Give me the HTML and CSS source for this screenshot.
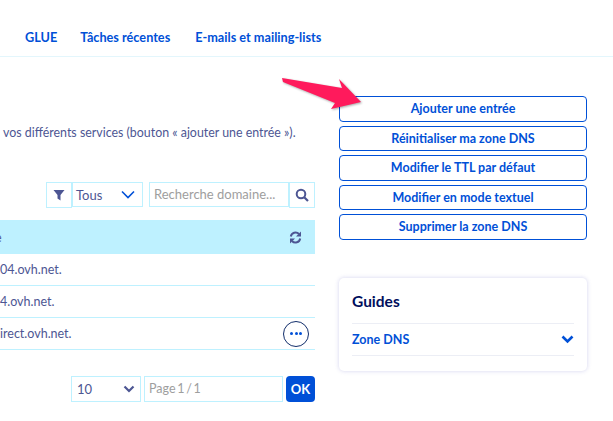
FILE: index.html
```html
<!DOCTYPE html>
<html lang="fr">
<head>
  <meta charset="UTF-8" />
  <title>Zone DNS</title>
  <link rel="stylesheet" href="styles.css">
</head>
<body>

<div class="tabs">
  <a href="#">GLUE</a>
  <a href="#">Tâches récentes</a>
  <a href="#">E-mails et mailing-lists</a>
</div>

<div class="content">
  <div class="main">
    <p class="intro">vos différents services (bouton « ajouter une entrée »).</p>

    <div class="filters">
      <span class="addon">
        <svg width="12" height="12" viewBox="0 0 12 12"><path d="M0.5 1h11L7.5 6v5.5L4.5 9.5V6z" fill="#4d5693"/></svg>
      </span>
      <span class="select select-type">Tous
        <svg width="16" height="9" viewBox="0 0 16 9"><path d="M2 1.5l6 6 6-6" fill="none" stroke="#0050d7" stroke-width="1.6"/></svg>
      </span>
      <span class="search-input">Recherche domaine...</span>
      <span class="addon addon-search">
        <svg width="14" height="14" viewBox="0 0 14 14"><circle cx="6" cy="6" r="4.3" fill="none" stroke="#4d5693" stroke-width="2"/><path d="M9.2 9.2l3.8 3.8" stroke="#4d5693" stroke-width="2.2"/></svg>
      </span>
    </div>

    <div class="table">
      <div class="table-head">
        <span class="cell-text">e</span>
        <svg width="13" height="13" viewBox="0 0 13 13"><path d="M1.800 5.500A4.800 4.800 0 0 1 10 3" fill="none" stroke="#4d5693" stroke-width="2"/><path d="M12 0.500v5h-5z" fill="#4d5693"/><path d="M11.200 7.500A4.800 4.800 0 0 1 3 10" fill="none" stroke="#4d5693" stroke-width="2"/><path d="M1 12.500v-5h5z" fill="#4d5693"/></svg>
      </div>
      <div class="row"><span class="cell-text">04.ovh.net.</span></div>
      <div class="row"><span class="cell-text">4.ovh.net.</span></div>
      <div class="row">
        <span class="cell-text">irect.ovh.net.</span>
        <span class="more"><i></i><i></i><i></i></span>
      </div>
    </div>

    <div class="pagination">
      <span class="select select-size">10
        <svg width="12" height="8" viewBox="0 0 12 8"><path d="M1.500 1.500L6 6l4.500-4.500" fill="none" stroke="#4d5693" stroke-width="2.200"/></svg>
      </span>
      <span class="page-input">Page 1 / 1</span>
      <button class="ok">OK</button>
    </div>
  </div>

  <div class="side">
    <div class="actions">
      <a href="#" class="action">Ajouter une entrée</a>
      <a href="#" class="action">Réinitialiser ma zone DNS</a>
      <a href="#" class="action">Modifier le TTL par défaut</a>
      <a href="#" class="action">Modifier en mode textuel</a>
      <a href="#" class="action">Supprimer la zone DNS</a>
    </div>

    <div class="guides">
      <h3>Guides</h3>
      <div class="guide-row">
        <span>Zone DNS</span>
        <svg width="13" height="9" viewBox="0 0 13 9"><path d="M1.500 1.500l5 5 5-5" fill="none" stroke="#0050d7" stroke-width="2.600"/></svg>
      </div>
    </div>
  </div>
</div>

<svg class="arrow" width="90" height="40" viewBox="0 0 90 40">
  <path d="M1 1L61 11L58 2L80 25L50 32L54 26L2 5z" fill="#ff1a5c"/>
</svg>

</body>
</html>
```

FILE: styles.css
```css
body {
  font-family: Lato, "Noto Sans", sans-serif;
  margin: 0;
  padding: 0;
  width: 613px;
  height: 421px;
  overflow: hidden;
  position: relative;
  background-color: #fff;
  color: #4d5693;
  font-size: 13px;
}

.tabs {
  display: flex;
  gap: 25px;
  height: 57px;
  align-items: center;
  padding-left: 25px;
  padding-top: 18px;
  box-sizing: border-box;
  border-bottom: 1px solid #e3f6fc;
  white-space: nowrap;
}

.tabs a {
  color: #0050d7;
  text-decoration: none;
  font-weight: 700;
  font-size: 12.700px;
}

.tabs a:first-child {
  margin-right: -2px;
}

.content {
  display: flex;
  gap: 24px;
}

.main {
  width: 315px;
  flex: none;
}

.intro {
  margin: 67px 0 0;
  padding-left: 3px;
  height: 18px;
  line-height: 18px;
  font-size: 12.400px;
  white-space: nowrap;
}

.filters {
  display: flex;
  justify-content: flex-end;
  margin-top: 40px;
  height: 26px;
}

.addon {
  width: 26px;
  box-sizing: border-box;
  border: 1px solid #bef1ff;
  display: flex;
  align-items: center;
  justify-content: center;
}

.select {
  display: flex;
  align-items: center;
  justify-content: space-between;
  box-sizing: border-box;
  border: 1px solid #bef1ff;
  font-size: 13px;
}

.select-type {
  width: 71px;
  padding: 0 6px 0 3px;
  margin-right: 6px;
  height: 25px;
}

.search-input {
  width: 140px;
  height: 25px;
  box-sizing: border-box;
  border: 1px solid #bef1ff;
  padding-left: 4px;
  line-height: 22px;
  color: #9e9e9e;
  font-size: 13px;
  white-space: nowrap;
  overflow: hidden;
}

.table {
  margin-top: 12px;
}

.table-head {
  height: 34px;
  background-color: #bef1ff;
  display: flex;
  align-items: center;
  justify-content: space-between;
  padding-right: 13px;
}

.cell-text {
  font-size: 12.500px;
}

.table-head .cell-text {
  margin-left: -5px;
}

.row {
  height: 31px;
  border-bottom: 1px solid #bef1ff;
  display: flex;
  align-items: center;
  justify-content: space-between;
  padding-right: 6px;
}

.more {
  width: 26px;
  height: 26px;
  box-sizing: border-box;
  border: 1px solid #122e6b;
  border-radius: 50%;
  display: flex;
  align-items: center;
  justify-content: center;
  gap: 1.500px;
}

.more i {
  width: 3px;
  height: 3px;
  border-radius: 50%;
  background-color: #0050d7;
}

.pagination {
  display: flex;
  justify-content: flex-end;
  margin-top: 26px;
  height: 26px;
}

.select-size {
  width: 70px;
  padding: 0 5px 0 5px;
  margin-right: 3px;
}

.page-input {
  width: 139px;
  box-sizing: border-box;
  border: 1px solid #bef1ff;
  padding-left: 4px;
  line-height: 24px;
  color: #9e9e9e;
  font-size: 12.500px;
  word-spacing: -1.500px;
  margin-right: 3px;
}

.ok {
  width: 29px;
  padding: 0;
  border: none;
  border-radius: 4px;
  background-color: #0050d7;
  color: #fff;
  font-family: inherit;
  font-weight: 700;
  font-size: 13px;
}

.side {
  width: 248px;
  flex: none;
}

.actions {
  display: flex;
  flex-direction: column;
  gap: 4px;
  margin-top: 39px;
}

.action {
  display: block;
  height: 25.500px;
  line-height: 24px;
  box-sizing: border-box;
  border: 1px solid #0050d7;
  border-radius: 4px;
  text-align: center;
  text-decoration: none;
  color: #0050d7;
  font-weight: 700;
  font-size: 12.500px;
}

.guides {
  margin-top: 38px;
  height: 93px;
  box-sizing: border-box;
  padding: 14px 13px 0;
  border-radius: 5px;
  box-shadow: 0 0 4px rgba(110, 110, 200, 0.3);
}

.guides h3 {
  margin: 0;
  height: 31px;
  line-height: 18px;
  font-size: 15.500px;
  font-weight: 700;
  color: #000e5c;
  border-bottom: 1px solid #eceef5;
}

.guide-row {
  height: 32px;
  padding-top: 1px;
  box-sizing: border-box;
  border-bottom: 1px solid #eceef5;
  display: flex;
  align-items: center;
  justify-content: space-between;
  color: #0050d7;
  font-weight: 700;
  font-size: 12.500px;
}

/* annotation drawn over the screenshot */
.arrow {
  position: absolute;
  left: 281px;
  top: 77px;
  filter: drop-shadow(1px 1px 1px rgba(0, 0, 0, 0.35));
}
```
